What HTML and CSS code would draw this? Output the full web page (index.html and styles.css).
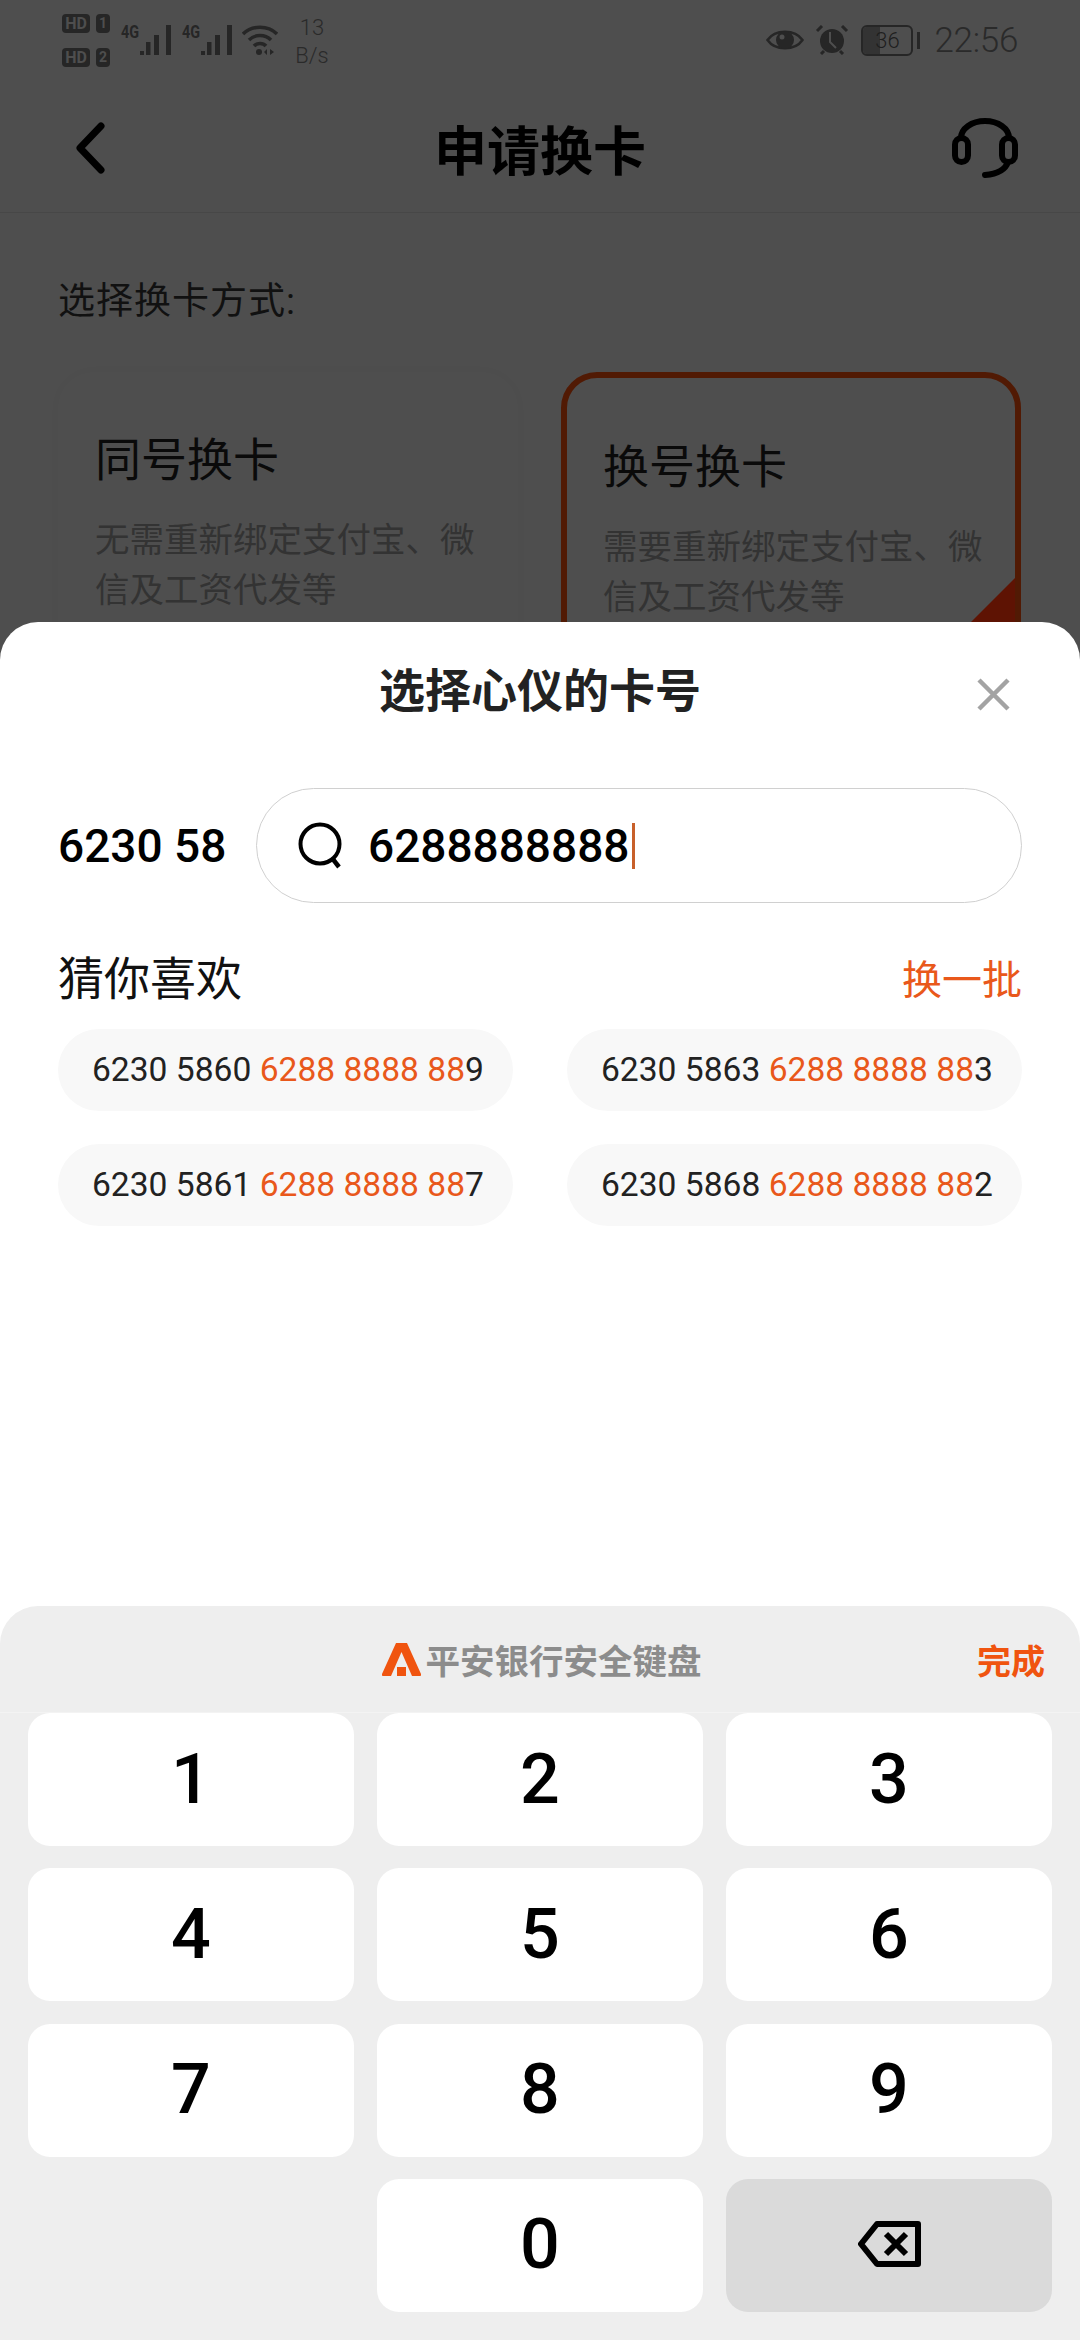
FILE: index.html
```html
<!DOCTYPE html>
<html lang="zh-CN">
<head>
    <meta charset="UTF-8">
    <meta name="viewport" content="width=device-width, initial-scale=1.0">
    <title>申请换卡</title>
    <link rel="stylesheet" href="styles.css">
</head>
<body>
    <div class="page">
        <div class="status-bar">
            <div class="status-left">
                <div class="hd-stack">
                    <div class="hd-row"><span class="hd">HD</span><span class="sim">1</span></div>
                    <div class="hd-row"><span class="hd">HD</span><span class="sim">2</span></div>
                </div>
                <div class="signal">
                    <span class="net">4G</span>
                    <svg width="31" height="30" viewBox="0 0 31 30"><g fill="#262626"><rect x="0" y="26" width="4" height="4"/><rect x="6" y="17" width="4.500" height="13"/><rect x="14" y="10" width="5" height="20"/><rect x="26" y="0" width="5" height="30"/></g></svg>
                </div>
                <div class="signal">
                    <span class="net">4G</span>
                    <svg width="31" height="30" viewBox="0 0 31 30"><g fill="#262626"><rect x="0" y="26" width="4" height="4"/><rect x="6" y="17" width="4.500" height="13"/><rect x="14" y="10" width="5" height="20"/><rect x="26" y="0" width="5" height="30"/></g></svg>
                </div>
                <svg class="wifi" width="36" height="32" viewBox="0 0 36 32"><g fill="none" stroke="#262626" stroke-width="3.500"><path d="M1 9C10 0 26 0 35 9"/><path d="M7 15C13 9 23 9 29 15"/><path d="M12 21C15 17.500 21 17.500 24 21"/></g><circle cx="17" cy="27" r="3" fill="#262626"/><path d="M25 24v6l-3-3zM28 24v6l4-3z" fill="#262626"/></svg>
                <div class="speed">13<br>B/s</div>
            </div>
            <div class="status-right">
                <svg class="ic-eye" width="38" height="26" viewBox="0 0 38 26"><path d="M1.500 13C9 2 29 2 36.500 13C29 24 9 24 1.500 13Z" fill="none" stroke="#262626" stroke-width="2.500"/><circle cx="19" cy="13" r="9" fill="#262626"/><circle cx="16" cy="10" r="2.500" fill="#4e4e4e"/></svg>
                <svg class="ic-alarm" width="34" height="30" viewBox="0 0 34 30"><circle cx="17" cy="16" r="12" fill="#262626"/><path d="M2 6l5-5M32 6l-5-5M6 29l3-3M28 29l-3-3" stroke="#262626" stroke-width="3"/><path d="M15 7v10l6 6" fill="none" stroke="#4e4e4e" stroke-width="2"/></svg>
                <div class="battery"><span class="battery-fill"></span><span class="battery-num">36</span></div>
                <span class="battery-cap"></span>
                <span class="clock">22:56</span>
            </div>
        </div>

        <div class="nav">
            <svg class="nav-back" width="32" height="52" viewBox="0 0 32 52"><path d="M28 4L7 26l21 22" fill="none" stroke="#000" stroke-width="7" stroke-linecap="round" stroke-linejoin="round"/></svg>
            <div class="nav-title">申请换卡</div>
            <svg class="nav-help" width="66" height="60" viewBox="0 0 66 60"><g fill="none" stroke="#000" stroke-width="6" stroke-linecap="round"><path d="M9 20A24 17 0 0 1 57 20"/><rect x="3" y="20" width="13" height="24" rx="6.500"/><rect x="50" y="20" width="13" height="24" rx="6.500"/><path d="M56 44C53 53 44 56 33 57"/></g></svg>
        </div>

        <div class="content">
            <div class="section-label">选择换卡方式:</div>
            <div class="cards">
                <div class="card">
                    <div class="card-title">同号换卡</div>
                    <div class="card-desc">无需重新绑定支付宝、微信及工资代发等</div>
                </div>
                <div class="card card-active">
                    <div class="card-title">换号换卡</div>
                    <div class="card-desc">需要重新绑定支付宝、微信及工资代发等</div>
                    <span class="card-corner"></span>
                </div>
            </div>
        </div>

        <div class="sheet">
            <div class="sheet-body">
                <div class="sheet-head">
                    <div class="sheet-title">选择心仪的卡号</div>
                    <svg class="sheet-close" width="33" height="33" viewBox="0 0 33 33"><path d="M2 2l29 29M31 2L2 31" stroke="#a3a3a3" stroke-width="4.500"/></svg>
                </div>
                <div class="search-row">
                    <div class="prefix">6230 58</div>
                    <div class="search-box">
                        <svg width="48" height="48" viewBox="0 0 48 48"><circle cx="22" cy="22" r="19.500" fill="none" stroke="#000" stroke-width="4"/><path d="M34 36l7 9" stroke="#000" stroke-width="4.500"/></svg>
                        <span class="search-text">6288888888</span><span class="caret"></span>
                    </div>
                </div>
                <div class="like-head">
                    <div class="like-title">猜你喜欢</div>
                    <div class="like-more">换一批</div>
                </div>
                <div class="chips">
                    <div class="chip">6230 5860 <em>6288 8888 88</em>9</div>
                    <div class="chip">6230 5863 <em>6288 8888 88</em>3</div>
                    <div class="chip">6230 5861 <em>6288 8888 88</em>7</div>
                    <div class="chip">6230 5868 <em>6288 8888 88</em>2</div>
                </div>
            </div>

            <div class="keyboard">
                <div class="kb-head">
                    <div class="kb-brand">
                        <svg width="39" height="33" viewBox="0 0 39 33"><path d="M14 0h11l14 31q1 2-2 2h-7L19.500 9 9 33H2q-3 0-2-2z" fill="#f0540f"/><rect x="15" y="24" width="9" height="9" fill="#f0540f"/></svg>
                        <span>平安银行安全键盘</span>
                    </div>
                    <div class="kb-done">完成</div>
                </div>
                <div class="keys">
                    <div class="key">1</div>
                    <div class="key">2</div>
                    <div class="key">3</div>
                    <div class="key">4</div>
                    <div class="key">5</div>
                    <div class="key">6</div>
                    <div class="key">7</div>
                    <div class="key">8</div>
                    <div class="key">9</div>
                    <div class="key key-empty"></div>
                    <div class="key">0</div>
                    <div class="key key-del">
                        <svg width="63" height="46" viewBox="0 0 63 46"><path d="M60 3H19L3 23l16 20h41z" fill="none" stroke="#000" stroke-width="6" stroke-linejoin="round"/><path d="M28 13l20 20M48 13L28 33" stroke="#000" stroke-width="6"/></svg>
                    </div>
                </div>
            </div>
        </div>
    </div>
</body>
</html>
```

FILE: styles.css
```css
* {
    box-sizing: border-box;
}

body {
    margin: 0;
    padding: 0;
    font-family: Roboto, "Noto Sans CJK SC", sans-serif;
    background: #4e4e4e;
}

.page {
    width: 1080px;
    height: 2340px;
    display: flex;
    flex-direction: column;
    overflow: hidden;
    position: relative;
}

/* status bar */
.status-bar {
    height: 84px;
    padding: 14px 62px 0 62px;
    display: flex;
    justify-content: space-between;
    color: #262626;
}

.status-left {
    display: flex;
    align-items: flex-start;
}

.hd-stack {
    display: flex;
    flex-direction: column;
    gap: 15px;
}

.hd-row {
    display: flex;
    gap: 6px;
    height: 19px;
}

.hd, .sim {
    background: #262626;
    color: #4e4e4e;
    font-size: 16px;
    font-weight: 700;
    line-height: 19px;
    border-radius: 4px;
    text-align: center;
}

.hd {
    width: 28px;
}

.sim {
    width: 14px;
    font-size: 14px;
}

.signal {
    display: flex;
    align-items: flex-start;
    margin: 11px 0 0 11px;
    width: 50px;
}

.net {
    width: 19px;
    font-size: 18px;
    font-weight: 700;
    line-height: 13px;
    transform: scaleX(0.8);
    transform-origin: left top;
}

.wifi {
    margin: 11px 0 0 10px;
}

.speed {
    margin-left: 14px;
    width: 40px;
    font-size: 22px;
    font-weight: 300;
    line-height: 28px;
    text-align: center;
    color: #2a2a2a;
}

.status-right {
    display: flex;
    align-items: flex-start;
}

.ic-eye {
    margin-top: 13px;
}

.ic-alarm {
    margin: 11px 0 0 11px;
}

.battery {
    position: relative;
    width: 52px;
    height: 31px;
    margin: 11px 0 0 12px;
    border: 2px solid #262626;
    border-radius: 6px;
    overflow: hidden;
}

.battery-fill {
    display: block;
    width: 17px;
    height: 100%;
    background: #333;
}

.battery-num {
    position: absolute;
    left: 0;
    right: 0;
    top: 0;
    text-align: center;
    font-size: 22px;
    font-weight: 300;
    line-height: 27px;
    color: #1e1e1e;
}

.battery-cap {
    width: 3px;
    height: 17px;
    margin: 18px 0 0 4px;
    background: #262626;
}

.clock {
    margin: 8px 0 0 14px;
    font-size: 35px;
    font-weight: 300;
    line-height: 38px;
    letter-spacing: -0.3px;
    color: #2a2a2a;
}

/* nav */
.nav {
    height: 129px;
    padding: 0 62px 0 73px;
    display: grid;
    grid-template-columns: 1fr auto 1fr;
    align-items: center;
    border-bottom: 1px solid #474747;
}

.nav-title {
    margin-left: -11px;
    font-size: 53px;
    font-weight: 700;
    color: #000;
}

.nav-help {
    justify-self: end;
}

/* page behind the sheet */
.content {
    padding: 64px 58px 0;
    height: 409px;
    overflow: hidden;
}

.section-label {
    font-size: 37px;
    line-height: 50px;
    letter-spacing: 1px;
    color: #111;
}

.cards {
    display: flex;
    gap: 43px;
    margin-top: 45px;
}

.card {
    width: 460px;
    height: 300px;
    padding: 52px 16px 0 31px;
    border-radius: 36px;
    border: 6px solid transparent;
    box-shadow: 0 0 14px rgba(0, 0, 0, 0.02);
    position: relative;
}

.card-active {
    border-color: #511a04;
    box-shadow: none;
    padding: 59px 16px 0 36px;
}

.card-title {
    font-size: 46px;
    line-height: 60px;
    color: #0a0a0a;
}

.card-desc {
    margin-top: 25px;
    font-size: 34.5px;
    line-height: 50px;
    color: #333;
}

.card-corner {
    position: absolute;
    right: 0;
    bottom: 0;
    width: 0;
    height: 0;
    border-style: solid;
    border-width: 0 0 88px 88px;
    border-color: transparent transparent #5e1303 transparent;
}

/* bottom sheet */
.sheet {
    position: absolute;
    left: 0;
    right: 0;
    top: 622px;
    bottom: 0;
    display: flex;
    flex-direction: column;
    background: #fff;
    border-radius: 38px 38px 0 0;
}

.sheet-body {
    flex: 1;
    padding: 0 58px;
}

.sheet-head {
    height: 166px;
    display: flex;
    justify-content: center;
    padding-top: 36px;
    position: relative;
}

.sheet-title {
    font-size: 46px;
    line-height: 66px;
    font-weight: 700;
    color: #222;
}

.sheet-close {
    position: absolute;
    right: 12px;
    top: 56px;
}

.search-row {
    display: flex;
    align-items: center;
    gap: 29px;
}

.prefix {
    width: 169px;
    font-size: 46px;
    font-weight: 500;
    color: #000;
    white-space: nowrap;
}

.search-box {
    flex: 1;
    height: 115px;
    padding-left: 41px;
    display: flex;
    align-items: center;
    border: 1px solid #d0d0d0;
    border-radius: 58px;
}

.search-text {
    margin-left: 22px;
    font-size: 46px;
    font-weight: 500;
    color: #000;
}

.caret {
    width: 3px;
    height: 46px;
    margin-left: 3px;
    background: #c8602a;
}

.like-head {
    margin-top: 46px;
    display: flex;
    justify-content: space-between;
    align-items: center;
}

.like-title {
    font-size: 46px;
    line-height: 60px;
    color: #111;
}

.like-more {
    margin-top: -4px;
    font-size: 40px;
    color: #e9581b;
}

.chips {
    margin-top: 20px;
    display: grid;
    grid-template-columns: 455px 455px;
    justify-content: space-between;
    row-gap: 33px;
}

.chip {
    height: 82px;
    padding-left: 34px;
    padding-bottom: 2px;
    display: flex;
    align-items: center;
    white-space: pre;
    font-size: 33.6px;
    color: #222;
    background: #f8f8f8;
    border-radius: 41px;
}

.chip em {
    font-style: normal;
    color: #e9581b;
}

/* keyboard */
.keyboard {
    height: 734px;
    padding: 0 28px;
    background: #eee;
    border-radius: 38px 38px 0 0;
}

.kb-head {
    height: 107px;
    margin: 0 -28px;
    position: relative;
    display: flex;
    justify-content: center;
    align-items: center;
    border-bottom: 1px solid #f3f3f3;
}

.kb-brand {
    display: flex;
    align-items: center;
    gap: 5px;
    margin-left: 3px;
    font-size: 34.5px;
    font-weight: 700;
    color: #8c8c8c;
}

.kb-done {
    position: absolute;
    right: 35px;
    font-size: 34px;
    font-weight: 700;
    color: #f0540f;
}

.keys {
    display: grid;
    grid-template-columns: repeat(3, 1fr);
    grid-auto-rows: 133px;
    gap: 22.3px 23px;
}

.key {
    display: flex;
    justify-content: center;
    align-items: center;
    padding-bottom: 2px;
    background: #fff;
    border-radius: 22px;
    font-size: 70px;
    font-weight: 500;
    color: #000;
}

.key-empty {
    background: transparent;
}

.key-del {
    background: #dadada;
}
```
